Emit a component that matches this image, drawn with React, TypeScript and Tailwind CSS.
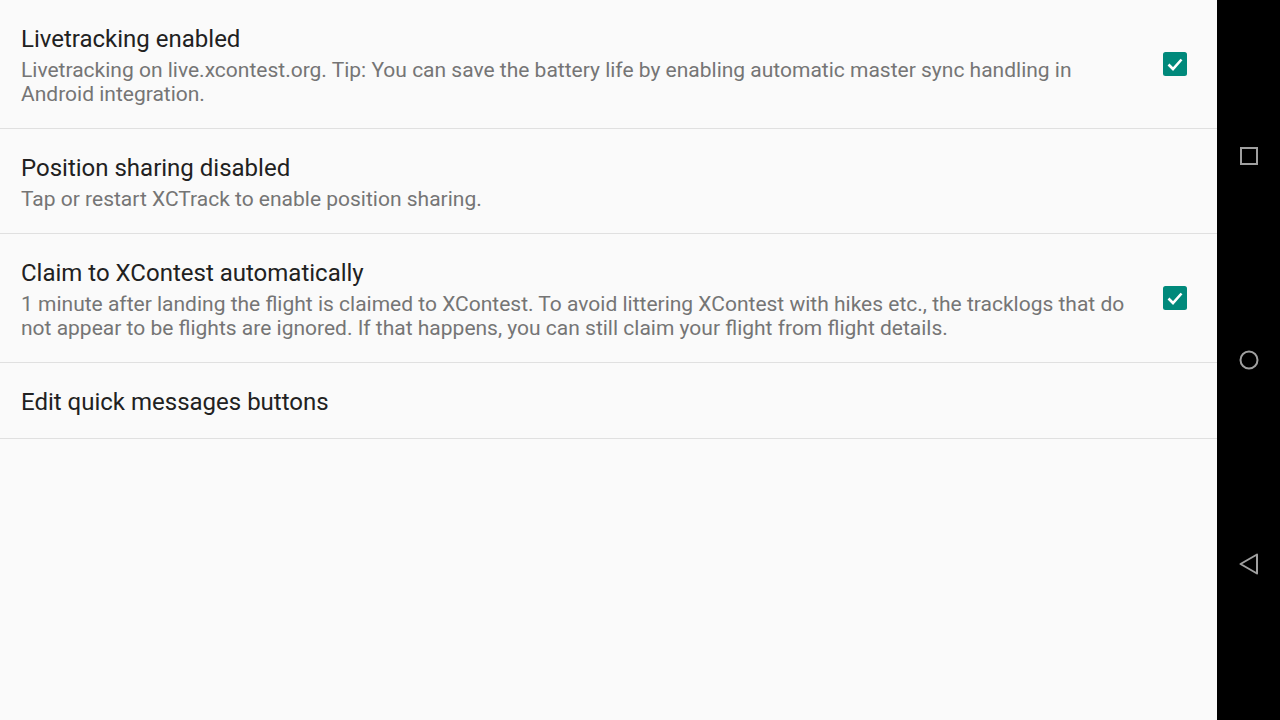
type Pref = {
  title: string;
  summary?: string;
  checked?: boolean;
};

const prefs: Pref[] = [
  {
    title: "Livetracking enabled",
    summary:
      "Livetracking on live.xcontest.org. Tip: You can save the battery life by enabling automatic master sync handling in Android integration.",
    checked: true,
  },
  {
    title: "Position sharing disabled",
    summary: "Tap or restart XCTrack to enable position sharing.",
  },
  {
    title: "Claim to XContest automatically",
    summary:
      "1 minute after landing the flight is claimed to XContest. To avoid littering XContest with hikes etc., the tracklogs that do not appear to be flights are ignored. If that happens, you can still claim your flight from flight details.",
    checked: true,
  },
  { title: "Edit quick messages buttons" },
];

function CheckBox() {
  return (
    <svg width="24" height="24" viewBox="0 0 24 24">
      <rect x="0" y="0" width="24" height="24" rx="2.5" fill="#00897b" />
      <path
        d="M5.5 12.5 L10 17 L18.5 7.5"
        fill="none"
        stroke="#fff"
        strokeWidth="2.6"
      />
    </svg>
  );
}

function PrefRow({ pref, last }: { pref: Pref; last?: boolean }) {
  return (
    <div
      className={
        "flex items-center border-b border-[#e0e0e0] pl-[21px] pt-6 " +
        (last ? "pb-[21px]" : "pb-[22px]")
      }
    >
      <div className="flex-1 min-w-0">
        <div className="text-[24px] leading-[30px] text-[#212121]">
          {pref.title}
        </div>
        {pref.summary && (
          <div className="mt-1 text-[21px] leading-6 text-[#757575]">
            {pref.summary}
          </div>
        )}
      </div>
      {pref.checked !== undefined && (
        <div className="w-[76px] pl-[22px] flex shrink-0 -translate-y-px">
          {pref.checked && <CheckBox />}
        </div>
      )}
    </div>
  );
}

export default function App() {
  return (
    <div
      className="flex w-[1280px] h-[720px] overflow-hidden"
      style={{ fontFamily: "Roboto, 'Noto Sans', sans-serif" }}
    >
      <div className="flex-1 bg-[#fafafa]">
        {prefs.map((p, i) => (
          <PrefRow key={p.title} pref={p} last={i === prefs.length - 1} />
        ))}
      </div>
      <div className="w-[63px] bg-black flex flex-col items-center justify-between py-[144px]">
        <svg width="24" height="24" viewBox="0 0 24 24" fill="none">
          <rect x="4" y="4" width="16" height="16" stroke="#a0a0a0" strokeWidth="2" />
        </svg>
        <svg width="24" height="24" viewBox="0 0 24 24" fill="none">
          <circle cx="12" cy="12" r="8.5" stroke="#a0a0a0" strokeWidth="2" />
        </svg>
        <svg width="24" height="24" viewBox="0 0 24 24" fill="none">
          <path d="M20 2.5 L3.5 12 L20 21.5 Z" stroke="#a0a0a0" strokeWidth="2" strokeLinejoin="round" />
        </svg>
      </div>
    </div>
  );
}
